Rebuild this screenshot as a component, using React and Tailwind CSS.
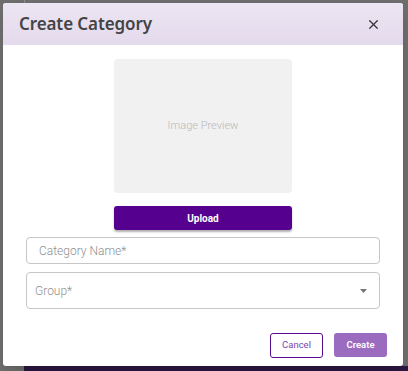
import React from "react";
import { X } from "lucide-react";

const CreateCategoryModal = () => {
  return (
    <div className="absolute left-[3px] top-[3px] w-[400px] h-[363px] bg-white rounded-[3px] shadow-lg flex flex-col overflow-hidden">
      {/* HEADER */}
      <div className="h-[42px] px-4 flex items-center justify-between bg-gradient-to-b from-[#ece5f2] to-[#e4daed]">
        <h3 className="text-[17px] font-semibold text-[#444] font-['Noto_Sans',sans-serif] tracking-[-0.1px]">
          Create Category
        </h3>
        <button className="mr-[6px] text-[#333]">
          <X className="w-[15px] h-[15px]" strokeWidth={2} />
        </button>
      </div>

      {/* BODY */}
      <div className="flex-1 flex flex-col items-center pt-[14px] px-[23px] font-['Roboto',sans-serif]">
        <div className="w-[178px] h-[134px] bg-[#f1f1f1] rounded-[4px] flex items-center justify-center">
          <span className="text-[11px] text-[#b8b8b8] font-light">Image Preview</span>
        </div>

        <button className="mt-[13px] w-[178px] h-[24px] bg-[#56008f] text-white text-[10px] font-bold rounded-[3px] shadow-[0_2px_2px_rgba(0,0,0,0.3)]">
          Upload
        </button>

        <div className="mt-[7px] w-full h-[27px] border border-[#c6c6c6] rounded-[4px] flex items-center pl-[12px] text-[12px] text-[#8f8f8f] font-light">
          Category Name*
        </div>

        <div className="mt-[8px] w-full h-[37px] border border-[#c6c6c6] rounded-[4px] flex items-center justify-between pl-[8px] pr-[12px] text-[12px] text-[#8f8f8f] font-light">
          <span>Group*</span>
          <svg width="7" height="4" viewBox="0 0 7 4">
            <path d="M0 0 L7 0 L3.5 4 Z" fill="#757575" />
          </svg>
        </div>

        {/* ACCIONES */}
        <div className="mt-auto mb-[8px] self-stretch flex justify-end gap-[11px] -mr-[7px]">
          <button className="w-[53px] h-[25px] border border-[#560d8f] rounded-[3px] text-[9.5px] text-[#7a45b0]">
            Cancel
          </button>
          <button className="w-[53px] h-[24px] bg-[#9b6bbf] rounded-[3px] text-[9.5px] text-white font-semibold">
            Create
          </button>
        </div>
      </div>
    </div>
  );
};

export default function App() {
  return (
    <div className="relative w-[408px] h-[371px] bg-[#6d6d6d] overflow-hidden">
      {/* fondo detras del modal */}
      <div className="absolute left-[24px] top-0 w-px h-[4px] bg-[#8a8a8a]" />
      <div className="absolute left-[24px] bottom-0 w-[384px] h-[5px] bg-[#2b1740]" />
      <CreateCategoryModal />
    </div>
  );
}
